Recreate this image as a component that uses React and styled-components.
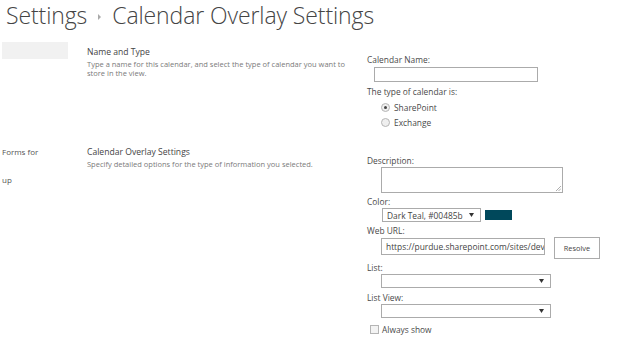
import React from 'react';
import styled, { createGlobalStyle } from 'styled-components';

const GlobalStyle = createGlobalStyle`
  html, body {
    margin: 0;
    padding: 0;
    background: #fff;
  }
  body {
    font-family: 'Open Sans', 'Liberation Sans', sans-serif;
    color: #444;
    overflow: hidden;
  }
`;

const Page = styled.div`
  width: 627px;
  height: 350px;
  background: #fff;
`;

const TitleBar = styled.h1`
  margin: 0;
  height: 42px;
  padding-left: 6px;
  display: flex;
  align-items: flex-start;
  font-family: 'Open Sans', 'Liberation Sans', sans-serif;
  font-weight: 300;
  font-size: 23px;
  line-height: 30px;
  color: #444;
  letter-spacing: -0.1px;
  white-space: nowrap;
`;

const Crumb = styled.span`
  display: flex;
  align-items: center;
  justify-content: center;
  width: 25px;
  height: 30px;
  padding-top: 2px;
`;

const Body = styled.div`
  display: flex;
`;

const LeftNav = styled.div`
  width: 87px;
  flex: none;
  display: flex;
  flex-direction: column;
  font-size: 8px;
  color: #555;
`;

const NavStub = styled.div`
  margin-left: 2px;
  width: 66px;
  height: 17px;
  background: #f1f1f1;
`;

const NavItem = styled.div`
  margin-top: ${(p) => p.top}px;
  padding-left: 2px;
  line-height: 12px;
  height: 12px;
`;

const Sections = styled.div`
  flex: 1;
  display: flex;
  flex-direction: column;
`;

const Section = styled.div`
  display: grid;
  grid-template-columns: 280px 1fr;
  height: ${(p) => p.height}px;
`;

const InfoCol = styled.div`
  padding-top: ${(p) => p.top}px;
`;

const Heading = styled.div`
  font-size: 8.6px;
  line-height: 14px;
  color: #444;
`;

const Description = styled.div`
  margin-top: 1px;
  width: 268px;
  font-size: 7.5px;
  line-height: 9px;
  color: #7a7a7a;
`;

const FieldCol = styled.div`
  padding-top: ${(p) => p.top}px;
  display: flex;
  flex-direction: column;
  align-items: flex-start;
`;

const Label = styled.div`
  margin-top: ${(p) => p.top || 0}px;
  font-size: 8.4px;
  line-height: 12px;
  height: 12px;
  color: #4a4a4a;
`;

const TextBox = styled.div`
  margin-top: ${(p) => p.top || 0}px;
  margin-left: ${(p) => p.indent}px;
  width: ${(p) => p.width}px;
  height: ${(p) => p.height}px;
  box-sizing: border-box;
  border: 1px solid #ababab;
  background: #fff;
  position: relative;
  font-size: 8.4px;
  line-height: ${(p) => p.height - 2}px;
  padding-left: 4px;
  color: #444;
  overflow: hidden;
  white-space: nowrap;
`;

const Grip = styled.svg`
  position: absolute;
  right: 1px;
  bottom: 1px;
`;

const Row = styled.div`
  margin-top: ${(p) => p.top || 0}px;
  margin-left: ${(p) => p.indent || 0}px;
  display: flex;
  align-items: ${(p) => p.align || 'center'};
  gap: ${(p) => p.gap || 0}px;
`;

const Option = styled.div`
  display: flex;
  align-items: center;
  height: 15px;
  margin-left: 14px;
  font-size: 8.4px;
  color: #4a4a4a;
`;

const Radio = styled.span`
  width: 7px;
  height: 7px;
  border-radius: 50%;
  border: 1px solid #b5b5b5;
  background: #efefef;
  margin-right: 4px;
  display: flex;
  align-items: center;
  justify-content: center;
  &::after {
    content: '';
    width: 3px;
    height: 3px;
    border-radius: 50%;
    background: ${(p) => (p.checked ? '#444' : 'transparent')};
  }
`;

const Select = styled.div`
  margin-left: ${(p) => p.indent}px;
  width: ${(p) => p.width}px;
  height: 14px;
  box-sizing: border-box;
  border: 1px solid #ababab;
  background: #fff;
  display: flex;
  align-items: center;
  justify-content: space-between;
  padding: 0 6px 0 4px;
  font-size: 8.4px;
  color: #444;
`;

const Swatch = styled.span`
  width: 27px;
  height: 10px;
  background: ${(p) => p.color};
`;

const Button = styled.button`
  width: 46px;
  height: 22px;
  margin-top: -1px;
  box-sizing: border-box;
  border: 1px solid #ababab;
  background: #fff;
  font-family: 'Open Sans', 'Liberation Sans', sans-serif;
  font-size: 7.4px;
  color: #444;
  padding: 0;
`;

const Check = styled.span`
  width: 7px;
  height: 7px;
  border: 1px solid #b5b5b5;
  background: #f3f3f3;
  margin-right: 3px;
`;

const CheckLabel = styled.span`
  font-size: 8.4px;
  color: #4a4a4a;
`;

const Arrow = () => (
  <svg width="5" height="4" viewBox="0 0 5 4">
    <path d="M0 0 L5 0 L2.5 4 Z" fill="#333" />
  </svg>
);

export default function App() {
  return (
    <Page>
      <GlobalStyle />
      <TitleBar>
        <span>Settings</span>
        <Crumb>
          <svg width="3" height="6" viewBox="0 0 3 6">
            <path d="M0 0 L3 3 L0 6 Z" fill="#aaa" />
          </svg>
        </Crumb>
        <span>Calendar Overlay Settings</span>
      </TitleBar>
      <Body>
        <LeftNav>
          <NavStub />
          <NavItem top={87}>Forms for</NavItem>
          <NavItem top={16}>up</NavItem>
        </LeftNav>
        <Sections>
          <Section height={100}>
            <InfoCol top={3}>
              <Heading>Name and Type</Heading>
              <Description>
                Type a name for this calendar, and select the type of calendar you want to store in the view.
              </Description>
            </InfoCol>
            <FieldCol top={12}>
              <Label>Calendar Name:</Label>
              <TextBox top={1} indent={7} width={164} height={15} />
              <Label top={4}>The type of calendar is:</Label>
              <Row top={2}>
                <Option>
                  <Radio checked />
                  SharePoint
                </Option>
              </Row>
              <Row>
                <Option>
                  <Radio />
                  Exchange
                </Option>
              </Row>
            </FieldCol>
          </Section>
          <Section height={208}>
            <InfoCol top={3}>
              <Heading>Calendar Overlay Settings</Heading>
              <Description>Specify detailed options for the type of information you selected.</Description>
            </InfoCol>
            <FieldCol top={13}>
              <Label>Description:</Label>
              <TextBox top={0} indent={14} width={182} height={26}>
                <Grip width="5" height="5" viewBox="0 0 5 5">
                  <path d="M5 0 L0 5 M5 2.5 L2.5 5" stroke="#999" strokeWidth="0.8" />
                </Grip>
              </TextBox>
              <Label top={3}>Color:</Label>
              <Row top={0} gap={4}>
                <Select indent={15} width={99}>
                  <span>Dark Teal, #00485b</span>
                  <Arrow />
                </Select>
                <Swatch color="#00485b" />
              </Row>
              <Label top={3}>Web URL:</Label>
              <Row top={1} gap={9} align="flex-start">
                <TextBox indent={14} width={164} height={17}>
                  https://purdue.sharepoint.com/sites/dev
                </TextBox>
                <Button>Resolve</Button>
              </Row>
              <Label top={3}>List:</Label>
              <Row top={0}>
                <Select indent={14} width={170}>
                  <span />
                  <Arrow />
                </Select>
              </Row>
              <Label top={4}>List View:</Label>
              <Row top={0}>
                <Select indent={14} width={170}>
                  <span />
                  <Arrow />
                </Select>
              </Row>
              <Row top={6} indent={3}>
                <Check />
                <CheckLabel>Always show</CheckLabel>
              </Row>
            </FieldCol>
          </Section>
        </Sections>
      </Body>
    </Page>
  );
}
